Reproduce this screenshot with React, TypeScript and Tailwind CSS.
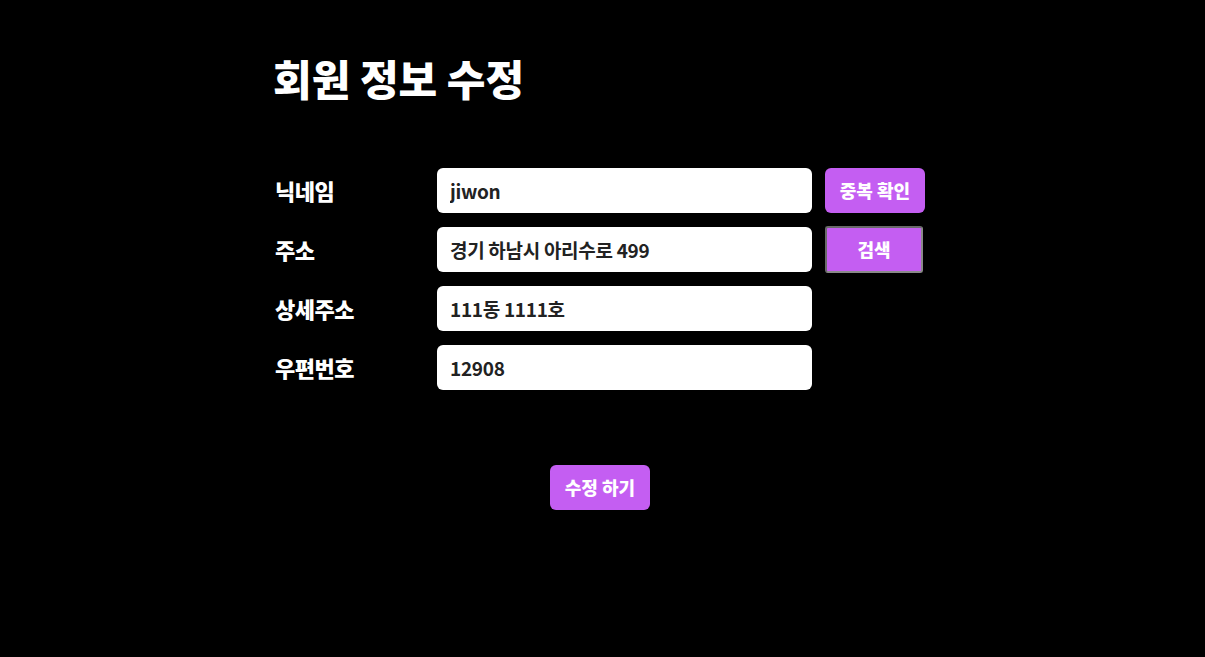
const fields = [
  { label: "닉네임", value: "jiwon", action: "중복 확인" },
  { label: "주소", value: "경기 하남시 아리수로 499", action: "검색" },
  { label: "상세주소", value: "111동 1111호" },
  { label: "우편번호", value: "12908" },
];

export default function App() {
  return (
    <div
      className="min-h-[657px] bg-black text-white"
      style={{ fontFamily: '"Noto Sans CJK KR", "Noto Sans", sans-serif' }}
    >
      <div className="w-[650px] ml-[275px] pt-[51px]">
        {/* Title */}
        <h1 className="text-[42px] font-black leading-[54px] -ml-[2px]">회원 정보 수정</h1>

        {/* Form */}
        <div className="mt-[63px] flex flex-col gap-[14px]">
          {fields.map((f) => (
            <div key={f.label} className="flex items-center h-[45px]">
              <label className="w-[162px] text-[22px] font-black tracking-[-0.5px]">{f.label}</label>
              <input
                readOnly
                value={f.value}
                className="w-[375px] h-[45px] rounded-md bg-white px-[13px] text-[19px] font-bold text-[#222] outline-none tracking-[-0.3px]"
              />
              {f.action === "중복 확인" && (
                <button className="ml-[13px] w-[100px] h-[45px] rounded-md bg-[#c45ef2] text-[18px] font-black text-white">
                  {f.action}
                </button>
              )}
              {f.action === "검색" && (
                <button className="ml-[13px] w-[98px] h-[47px] rounded-[3px] border-2 border-t-[#6a6a6a] border-l-[#6a6a6a] border-r-[#8a8a8a] border-b-[#8a8a8a] bg-[#c45ef2] text-[18px] font-black text-white">
                  {f.action}
                </button>
              )}
            </div>
          ))}
        </div>

        {/* Submit */}
        <div className="mt-[75px] flex justify-center">
          <button className="w-[100px] h-[45px] rounded-md bg-[#c45ef2] text-[18px] font-black text-white">
            수정 하기
          </button>
        </div>
      </div>
    </div>
  );
}
